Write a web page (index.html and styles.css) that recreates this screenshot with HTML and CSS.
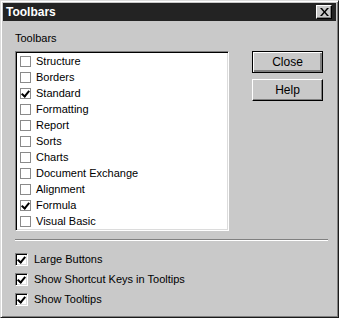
FILE: index.html
```html
<!DOCTYPE html>
<html lang="en">
<head>
    <meta charset="UTF-8">
    <title>Toolbars</title>
    <link rel="stylesheet" href="styles.css">
</head>
<body>
    <div class="window">
        <div class="titlebar">
            <span class="title">Toolbars</span>
            <button class="title-close">
                <svg width="9" height="8" viewBox="0 0 9 8"><path d="M0 0h2l2.5 3 2.5-3h2L5.5 4 9 8H7L4.5 5 2 8H0l3.5-4z" fill="#000"/></svg>
            </button>
        </div>
        <div class="content">
            <div class="top">
                <div class="list-col">
                    <div class="label">Toolbars</div>
                    <div class="list">
                        <div class="item"><span class="flat-box"></span>Structure</div>
                        <div class="item"><span class="flat-box"></span>Borders</div>
                        <div class="item"><span class="flat-box checked"></span>Standard</div>
                        <div class="item"><span class="flat-box"></span>Formatting</div>
                        <div class="item"><span class="flat-box"></span>Report</div>
                        <div class="item"><span class="flat-box"></span>Sorts</div>
                        <div class="item"><span class="flat-box"></span>Charts</div>
                        <div class="item"><span class="flat-box"></span>Document Exchange</div>
                        <div class="item"><span class="flat-box"></span>Alignment</div>
                        <div class="item"><span class="flat-box checked"></span>Formula</div>
                        <div class="item"><span class="flat-box"></span>Visual Basic</div>
                    </div>
                </div>
                <div class="buttons">
                    <button class="btn default">Close</button>
                    <button class="btn">Help</button>
                </div>
            </div>
            <div class="separator"></div>
            <div class="options">
                <label class="option"><span class="box checked"></span>Large Buttons</label>
                <label class="option"><span class="box checked"></span>Show Shortcut Keys in Tooltips</label>
                <label class="option"><span class="box checked"></span>Show Tooltips</label>
            </div>
        </div>
    </div>
</body>
</html>
```

FILE: styles.css
```css
body {
    margin: 0;
    font-family: "Liberation Sans", Arial, sans-serif;
    font-size: 11px;
    color: #000;
    background: #c9c9c9;
}
.window {
    width: 339px;
    height: 318px;
    box-sizing: border-box;
    background: #c9c9c9;
    border: 1px solid;
    border-color: #dcdcdc #1a1a1a #1a1a1a #dcdcdc;
    box-shadow: inset 1px 1px 0 #fff, inset -1px -1px 0 #808080;
    padding: 2px;
}
.titlebar {
    height: 18px;
    background: #232323;
    display: flex;
    align-items: center;
    justify-content: space-between;
    padding: 0 4px 0 3px;
}
.title {
    color: #fff;
    font-weight: bold;
    font-size: 12px;
}
.title-close {
    width: 16px;
    height: 14px;
    padding: 0;
    border: 1px solid;
    border-color: #fff #000 #000 #fff;
    box-shadow: inset -1px -1px 0 #808080;
    background: #c9c9c9;
    display: flex;
    align-items: center;
    justify-content: center;
}
.content {
    padding: 10px 8px 0 12px;
}
.top {
    display: flex;
}
.list-col {
    width: 214px;
}
.label {
    height: 20px;
    line-height: 14px;
}
.list {
    height: 180px;
    box-sizing: border-box;
    background: #fff;
    border: 1px solid;
    border-color: #808080 #fff #fff #808080;
    box-shadow: inset 1px 1px 0 #000, inset -1px -1px 0 #dcdcdc;
    padding: 1px 3px;
}
.item {
    height: 16px;
    display: flex;
    align-items: center;
}
.flat-box {
    width: 11px;
    height: 11px;
    box-sizing: border-box;
    border: 1px solid #8a8a8a;
    margin: 0 5px 0 1px;
    position: relative;
}
.checked::after {
    content: "";
    position: absolute;
    left: 2px;
    top: 0px;
    width: 3px;
    height: 6px;
    border: solid #000;
    border-width: 0 2px 2px 0;
    transform: rotate(40deg);
}
.buttons {
    display: flex;
    flex-direction: column;
    gap: 6px;
    margin: 20px 0 0 23px;
}
.btn {
    width: 71px;
    height: 22px;
    box-sizing: border-box;
    font-family: inherit;
    font-size: 12px;
    background: #c9c9c9;
    border: 1px solid;
    border-color: #fff #000 #000 #fff;
    box-shadow: inset -1px -1px 0 #808080;
    padding: 0;
}
.btn.default {
    border: 1px solid #000;
    box-shadow: inset 1px 1px 0 #fff, inset -2px -2px 0 #808080;
}
.separator {
    height: 0;
    border-top: 1px solid #808080;
    border-bottom: 1px solid #fff;
    margin: 8px 0 0 0;
}
.options {
    padding-top: 8px;
}
.option {
    display: flex;
    align-items: center;
    height: 20px;
    margin-bottom: 0;
}
.box {
    width: 13px;
    height: 13px;
    box-sizing: border-box;
    background: #fff;
    border: 1px solid;
    border-color: #808080 #fff #fff #808080;
    box-shadow: inset 1px 1px 0 #000, inset -1px -1px 0 #dcdcdc;
    margin-right: 6px;
    position: relative;
}
.box.checked::after {
    left: 3px;
    top: 1px;
}
```
